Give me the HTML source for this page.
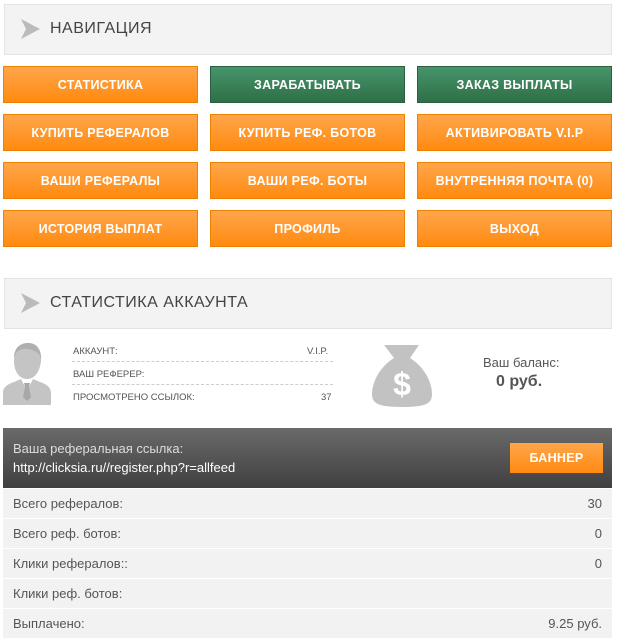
<!DOCTYPE html>
<html><head><meta charset="utf-8"><style>
*{margin:0;padding:0;box-sizing:border-box}
body{width:617px;height:643px;background:#fff;position:relative;font-family:"Liberation Sans",sans-serif;overflow:hidden}
.hdr{position:absolute;left:4px;width:608px;height:51px;background:#f3f3f3;border:1px solid #e3e3e3}
.hdr .t{position:absolute;left:45px;top:15px;font-size:16px;color:#444;letter-spacing:.5px}
.hdr svg{position:absolute;left:14px;top:13px}
.b{position:absolute;width:195px;height:37px;color:#fff;font-size:12.5px;font-weight:bold;text-align:center;line-height:37px;letter-spacing:.3px}
.o{background:linear-gradient(#ffa64a,#ff8a10);border:1px solid #f08000}
.g{background:linear-gradient(#47956a,#2f6f48);border:1px solid #2a6040}
.sm{position:absolute;font-size:9.5px;color:#555}
.dash{position:absolute;left:72px;width:261px;border-top:1px dashed #ccc}
.row{position:absolute;left:3px;width:609px;height:29px;background:#f2f2f2;font-size:13px;color:#555;line-height:29px;padding:0 10px}
.row span{float:right}
</style></head><body>
<div class="hdr" style="top:4px"><svg width="22" height="22" viewBox="0 0 22 22"><path d="M2 1 L21 11 L2 21 L7 11Z" fill="#bbb"/></svg><div class="t">НАВИГАЦИЯ</div></div>
<div class="b o" style="left:3px;top:66px">СТАТИСТИКА</div>
<div class="b g" style="left:210px;top:66px">ЗАРАБАТЫВАТЬ</div>
<div class="b g" style="left:417px;top:66px">ЗАКАЗ ВЫПЛАТЫ</div>
<div class="b o" style="left:3px;top:114px">КУПИТЬ РЕФЕРАЛОВ</div>
<div class="b o" style="left:210px;top:114px">КУПИТЬ РЕФ. БОТОВ</div>
<div class="b o" style="left:417px;top:114px">АКТИВИРОВАТЬ V.I.P</div>
<div class="b o" style="left:3px;top:162px">ВАШИ РЕФЕРАЛЫ</div>
<div class="b o" style="left:210px;top:162px">ВАШИ РЕФ. БОТЫ</div>
<div class="b o" style="left:417px;top:162px">ВНУТРЕННЯЯ ПОЧТА (0)</div>
<div class="b o" style="left:3px;top:210px">ИСТОРИЯ ВЫПЛАТ</div>
<div class="b o" style="left:210px;top:210px">ПРОФИЛЬ</div>
<div class="b o" style="left:417px;top:210px">ВЫХОД</div>
<div class="hdr" style="top:278px"><svg width="22" height="22" viewBox="0 0 22 22"><path d="M2 1 L21 11 L2 21 L7 11Z" fill="#bbb"/></svg><div class="t">СТАТИСТИКА АККАУНТА</div></div>
<svg style="position:absolute;left:2px;top:341px" width="50" height="64" viewBox="0 0 50 64">
<path d="M12 20 C12 6 20 2 26 2 C36 2 40 10 39 20 C38 30 33 38 25 38 C17 38 12 30 12 20Z" fill="#c4c4c4"/>
<path d="M12 17 C14 8 22 6 30 9 C34 11 38 12 39 18 C39 8 34 2 26 2 C18 2 12 7 12 17Z" fill="#b0b0b0"/>
<path d="M1 64 L1 52 C1 46 6 43 12 41 L19 38 L25 50 L31 38 L38 41 C44 43 49 46 49 52 L49 64Z" fill="#c4c4c4"/>
<path d="M22 42 L28 42 L27 46 L29 56 L25 60 L21 56 L23 46Z" fill="#a8a8a8"/>
</svg>
<div class="sm" style="left:73px;top:346px">АККАУНТ:</div><div class="sm" style="left:307px;top:346px">V.I.P.</div>
<div class="dash" style="top:361px"></div>
<div class="sm" style="left:73px;top:369px">ВАШ РЕФЕРЕР:</div>
<div class="dash" style="top:384px"></div>
<div class="sm" style="left:73px;top:392px">ПРОСМОТРЕНО ССЫЛОК:</div><div class="sm" style="left:321px;top:392px">37</div>
<svg style="position:absolute;left:370px;top:344px" width="64" height="64" viewBox="0 0 64 64">
<path d="M14 1 L49 1 L40 14 C56 24 62 40 62 50 C62 60 55 63 32 63 C9 63 2 60 2 50 C2 40 8 24 24 14Z" fill="#c2c2c2"/>
<text x="32" y="51" font-family="Liberation Sans" font-weight="bold" font-size="32" fill="#fff" text-anchor="middle">$</text>
</svg>
<div style="position:absolute;left:483px;top:355px;font-size:13px;color:#555">Ваш баланс:</div>
<div style="position:absolute;left:496px;top:373px;font-size:16px;font-weight:bold;color:#555">0 руб.</div>
<div style="position:absolute;left:3px;top:428px;width:609px;height:60px;background:linear-gradient(#6a6a6a,#404040)"></div>
<div style="position:absolute;left:13px;top:441px;font-size:13px;color:#ddd">Ваша реферальная ссылка:</div>
<div style="position:absolute;left:13px;top:460px;font-size:13px;color:#fff">http://clicksia.ru//register.php?r=allfeed</div>
<div class="b o" style="left:510px;top:443px;width:93px;height:30px;line-height:30px;border:none">БАННЕР</div>
<div class="row" style="top:489px">Всего рефералов:<span>30</span></div>
<div class="row" style="top:519px">Всего реф. ботов:<span>0</span></div>
<div class="row" style="top:549px">Клики рефералов::<span>0</span></div>
<div class="row" style="top:579px">Клики реф. ботов:</div>
<div class="row" style="top:609px">Выплачено:<span>9.25 руб.</span></div>
</body></html>
